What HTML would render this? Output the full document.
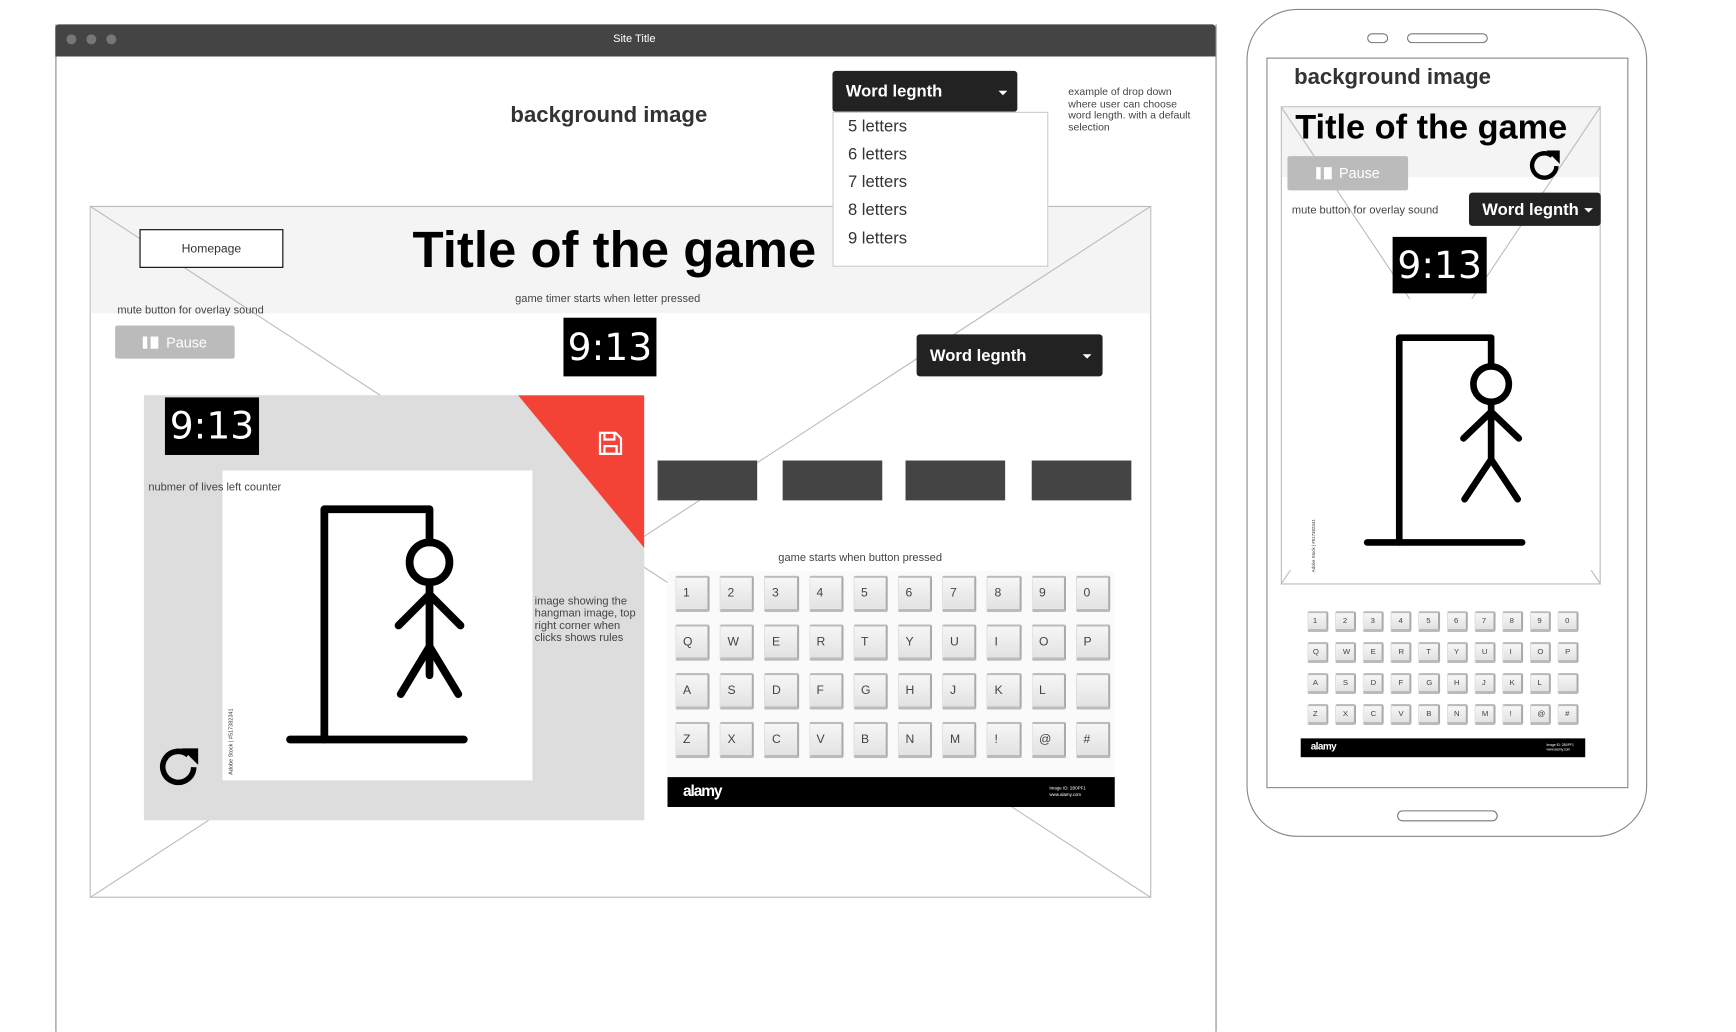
<!DOCTYPE html>
<html><head><meta charset="utf-8">
<style>
html,body{margin:0;padding:0;background:#fff;overflow:hidden;width:1736px;height:1021px}
#w{position:absolute;left:0;top:0;width:1570px;height:923px;transform:scale(1.107);transform-origin:0 0;font-family:"Liberation Sans",sans-serif;color:#333}
.a{position:absolute}
.t{font-size:10px;color:#444;white-space:nowrap}
.dd{background:#222;color:#fff;font-weight:bold;font-size:15px;border-radius:3px;box-sizing:border-box;padding-left:12px;display:flex;align-items:center}
.caret{position:absolute;width:0;height:0;border-left:4px solid transparent;border-right:4px solid transparent;border-top:4px solid #fff}
.timer{background:#000;color:#fff;display:flex;align-items:center;justify-content:center;font-family:"DejaVu Sans",sans-serif}
.kb{display:grid;grid-template-columns:repeat(10,1fr)}
.k{box-sizing:border-box;background:linear-gradient(#f6f6f6,#e2e2e2);border:1px solid #ddd;border-top:2px solid #bbb;border-right:2px solid #aaa;border-bottom:3px solid #bbb;border-radius:2px;color:#444;display:flex;align-items:center;padding-left:6px}
.pause{background:#bbb;color:#fff;border-radius:2px;display:flex;align-items:center;justify-content:center;font-size:13px}
.pi{display:inline-block;width:4px;height:11px;background:#fff;border-right:3px solid #bbb;box-shadow:7px 0 0 #fff;margin-right:14px}
</style></head><body><div id="w">

<!-- browser window -->
<div class="a" style="left:50px;top:22px;width:1047px;height:910px;border:1px solid #888;border-top:none;border-bottom:none"></div>
<div class="a" style="left:50px;top:22px;width:1048px;height:29px;background:#444;border-radius:3px 3px 0 0"></div>
<div class="a" style="left:60px;top:31px;width:9px;height:9px;border-radius:50%;background:#777"></div>
<div class="a" style="left:78px;top:31px;width:9px;height:9px;border-radius:50%;background:#777"></div>
<div class="a" style="left:96px;top:31px;width:9px;height:9px;border-radius:50%;background:#777"></div>
<div class="a" style="left:523px;top:30px;width:100px;text-align:center;color:#fff;font-size:10px">Site Title</div>

<div class="a" style="left:440px;top:93px;width:220px;text-align:center;font-size:20px;font-weight:bold;color:#333">background image</div>

<!-- big placeholder -->
<div class="a" style="left:81px;top:186px;width:957px;height:623px;border:1px solid #bbb;background:#fff"></div>
<div class="a" style="left:82px;top:187px;width:957px;height:96px;background:#f4f4f4"></div>
<svg class="a" style="left:81px;top:186px" width="959" height="625"><line x1="0" y1="0" x2="959" y2="625" stroke="#bbb"/><line x1="959" y1="0" x2="0" y2="625" stroke="#bbb"/></svg>

<div class="a" style="left:126px;top:207px;width:128px;height:33px;border:1.5px solid #000;background:#fff;font-size:11px;display:flex;align-items:center;justify-content:center">Homepage</div>
<div class="a" style="left:340px;top:198px;width:430px;text-align:center;font-size:46px;font-weight:bold;color:#000">Title of the game</div>
<div class="a t" style="left:449px;top:265px;width:200px;text-align:center">game timer starts when letter pressed</div>
<div class="a t" style="left:106px;top:275px">mute button for overlay sound</div>
<div class="a pause" style="left:104px;top:294px;width:108px;height:30px"><span class="pi"></span>Pause</div>
<div class="a timer" style="left:509px;top:287px;width:84px;height:53px;font-size:34px">9:13</div>
<div class="a dd" style="left:828px;top:302px;width:168px;height:38px">Word legnth<span class="caret" style="left:150px;top:18px"></span></div>

<!-- grey panel -->
<div class="a" style="left:130px;top:357px;width:452px;height:384px;background:#ddd"></div>
<svg class="a" style="left:468px;top:357px" width="114" height="140"><polygon points="0,0 114,0 114,138" fill="#f44336"/>
<g fill="none" stroke="#fff" stroke-width="2"><path d="M74 34h14l5 5v14h-19z"/><path d="M78 34v6h9v-6"/><rect x="78" y="46" width="11" height="7"/></g></svg>
<div class="a timer" style="left:149px;top:359px;width:85px;height:52px;font-size:34px">9:13</div>
<div class="a" style="left:201px;top:425px;width:280px;height:280px;background:#fff"></div>
<div class="a t" style="left:134px;top:435px">nubmer of lives left counter</div>
<svg class="a" style="left:201px;top:425px" width="280" height="280"><g stroke="#000" stroke-width="7" fill="none" stroke-linecap="round" stroke-linejoin="round">
<path d="M92 243V35h95v30"/><circle cx="187" cy="83" r="18"/><path d="M187 101v84M159 140l28-28 28 28M161 202l26-43 26 43M61 243h157"/></g>
<text x="0" y="0" transform="translate(9,275) rotate(-90)" font-size="5" fill="#333">Adobe Stock | #517382341</text></svg>
<svg class="a" style="left:141px;top:673px" width="44" height="44"><path d="M34 20a14 14 0 1 1-5-11" fill="none" stroke="#000" stroke-width="5"/><polygon points="23,3 38,3 38,18" fill="#000"/></svg>
<div class="a t" style="left:483px;top:538px;line-height:11px;white-space:normal;width:100px">image showing the hangman image, top right corner when clicks shows rules</div>

<div class="a" style="left:594px;top:416px;width:90px;height:36px;background:#444"></div>
<div class="a" style="left:707px;top:416px;width:90px;height:36px;background:#444"></div>
<div class="a" style="left:818px;top:416px;width:90px;height:36px;background:#444"></div>
<div class="a" style="left:932px;top:416px;width:90px;height:36px;background:#444"></div>
<div class="a t" style="left:677px;top:499px;width:200px;text-align:center">game starts when button pressed</div>

<div class="a" style="left:603px;top:516px;width:404px;height:186px;background:#fafafa"></div>
<div class="a kb" style="left:610px;top:520px;width:393px;row-gap:11px;column-gap:9px;font-size:11px">
<span class="k" style="height:33px">1</span><span class="k">2</span><span class="k">3</span><span class="k">4</span><span class="k">5</span><span class="k">6</span><span class="k">7</span><span class="k">8</span><span class="k">9</span><span class="k">0</span>
<span class="k" style="height:33px">Q</span><span class="k">W</span><span class="k">E</span><span class="k">R</span><span class="k">T</span><span class="k">Y</span><span class="k">U</span><span class="k">I</span><span class="k">O</span><span class="k">P</span>
<span class="k" style="height:33px">A</span><span class="k">S</span><span class="k">D</span><span class="k">F</span><span class="k">G</span><span class="k">H</span><span class="k">J</span><span class="k">K</span><span class="k">L</span><span class="k"></span>
<span class="k" style="height:33px">Z</span><span class="k">X</span><span class="k">C</span><span class="k">V</span><span class="k">B</span><span class="k">N</span><span class="k">M</span><span class="k">!</span><span class="k">@</span><span class="k">#</span>
</div>
<div class="a" style="left:603px;top:702px;width:404px;height:27px;background:#000;color:#fff"><span class="a" style="left:14px;top:4px;font-size:14px;font-weight:bold;letter-spacing:-1px">alamy</span><span class="a" style="left:345px;top:7px;font-size:4px;line-height:6px">Image ID: 2B0PF1<br>www.alamy.com</span></div>

<!-- dropdown -->
<div class="a dd" style="left:752px;top:64px;width:167px;height:37px">Word legnth<span class="caret" style="left:150px;top:18px"></span></div>
<div class="a" style="left:752px;top:101px;width:193px;height:138px;background:#fff;border:1px solid #ccc;font-size:15px;color:#333">
<div class="a" style="left:13px;top:4px">5 letters</div><div class="a" style="left:13px;top:29px">6 letters</div><div class="a" style="left:13px;top:54px">7 letters</div><div class="a" style="left:13px;top:79px">8 letters</div><div class="a" style="left:13px;top:105px">9 letters</div></div>
<div class="a" style="left:965px;top:79px;font-size:9.5px;line-height:10.5px;color:#444">example of drop down<br>where user can choose<br>word length. with a default<br>selection</div>

<!-- phone -->
<div class="a" style="left:1126px;top:8px;width:360px;height:746px;border:1px solid #888;border-radius:46px"></div>
<div class="a" style="left:1235px;top:30px;width:17px;height:7px;border:1px solid #777;border-radius:5px"></div>
<div class="a" style="left:1271px;top:30px;width:71px;height:7px;border:1px solid #777;border-radius:5px"></div>
<div class="a" style="left:1144px;top:52px;width:325px;height:658px;border:1px solid #888"></div>
<div class="a" style="left:1262px;top:732px;width:89px;height:8px;border:1px solid #777;border-radius:5px"></div>
<div class="a" style="left:1169px;top:59px;font-size:20px;font-weight:bold;color:#333">background image</div>
<div class="a" style="left:1157px;top:96px;width:287px;height:430px;border:1px solid #bbb;background:#fff"></div>
<div class="a" style="left:1158px;top:97px;width:287px;height:63px;background:#f4f4f4"></div>
<svg class="a" style="left:1157px;top:96px" width="289" height="432"><line x1="0" y1="0" x2="289" y2="432" stroke="#bbb"/><line x1="289" y1="0" x2="0" y2="432" stroke="#bbb"/></svg>
<div class="a" style="left:1170px;top:97px;font-size:31px;font-weight:bold;color:#000">Title of the game</div>
<div class="a pause" style="left:1163px;top:141px;width:109px;height:31px"><span class="pi"></span>Pause</div>
<svg class="a" style="left:1378px;top:132px" width="36" height="36"><path d="M28 18a11 11 0 1 1-4-9" fill="none" stroke="#000" stroke-width="4"/><polygon points="19,4 31,4 31,16" fill="#000"/></svg>
<div class="a t" style="left:1167px;top:185px">mute button for overlay sound</div>
<div class="a dd" style="left:1327px;top:174px;width:119px;height:30px;font-size:15px">Word legnth<span class="caret" style="left:104px;top:14px"></span></div>
<div class="a timer" style="left:1258px;top:214px;width:85px;height:51px;font-size:34px">9:13</div>
<div class="a" style="left:1160px;top:270px;width:283px;height:245px;background:#fff"></div>
<svg class="a" style="left:1158px;top:265px" width="287" height="262">
<g stroke="#000" stroke-width="6" fill="none" stroke-linecap="round" stroke-linejoin="round"><path d="M106 225V40h83v24"/><circle cx="189" cy="82" r="16"/><path d="M189 98v52M164 131l25-24 25 24M165 186l24-36 24 36M77 225h140"/></g>
<text transform="translate(30,252) rotate(-90)" font-size="4" fill="#333">Adobe Stock | #517382341</text></svg>
<div class="a kb" style="left:1181px;top:552px;width:245px;row-gap:9px;column-gap:6px;font-size:7px">
<span class="k" style="height:19px;padding-left:4px">1</span><span class="k">2</span><span class="k">3</span><span class="k">4</span><span class="k">5</span><span class="k">6</span><span class="k">7</span><span class="k">8</span><span class="k">9</span><span class="k">0</span>
<span class="k" style="height:19px;padding-left:4px">Q</span><span class="k">W</span><span class="k">E</span><span class="k">R</span><span class="k">T</span><span class="k">Y</span><span class="k">U</span><span class="k">I</span><span class="k">O</span><span class="k">P</span>
<span class="k" style="height:19px;padding-left:4px">A</span><span class="k">S</span><span class="k">D</span><span class="k">F</span><span class="k">G</span><span class="k">H</span><span class="k">J</span><span class="k">K</span><span class="k">L</span><span class="k"></span>
<span class="k" style="height:19px;padding-left:4px">Z</span><span class="k">X</span><span class="k">C</span><span class="k">V</span><span class="k">B</span><span class="k">N</span><span class="k">M</span><span class="k">!</span><span class="k">@</span><span class="k">#</span>
</div>
<div class="a" style="left:1175px;top:667px;width:257px;height:17px;background:#000;color:#fff"><span class="a" style="left:9px;top:2px;font-size:9px;font-weight:bold;letter-spacing:-0.5px">alamy</span><span class="a" style="left:222px;top:4px;font-size:3px;line-height:4px">Image ID: 2B0PF1<br>www.alamy.com</span></div>

</div></body></html>
